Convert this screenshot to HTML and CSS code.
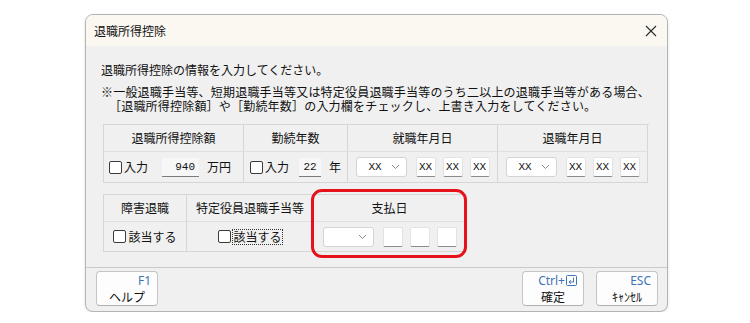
FILE: index.html
```html
<!DOCTYPE html>
<html lang="ja">
<head>
    <meta charset="UTF-8">
    <meta name="viewport" content="width=device-width, initial-scale=1.0">
    <title>退職所得控除</title>
    <link rel="stylesheet" href="styles.css">
</head>
<body>
    <div class="dialog">
        <div class="titlebar">
            <span class="title">退職所得控除</span>
            <svg class="close" width="12" height="12" viewBox="0 0 12 12"><path d="M1 1L11 11M11 1L1 11" stroke="#2b2b2b" stroke-width="1.1" fill="none"/></svg>
        </div>

        <div class="content">
            <p class="lead">退職所得控除の情報を入力してください。</p>
            <p class="note">※一般退職手当等、短期退職手当等又は特定役員退職手当等のうち二以上の退職手当等がある場合、<br>［退職所得控除額］や［勤続年数］の入力欄をチェックし、上書き入力をしてください。</p>

            <div class="grid grid-top">
                <div class="cell head">退職所得控除額</div>
                <div class="cell head">勤続年数</div>
                <div class="cell head">就職年月日</div>
                <div class="cell head">退職年月日</div>

                <div class="cell data left">
                    <span class="check"></span><span class="label">入力</span>
                    <span class="field amount">940</span><span class="unit">万円</span>
                </div>
                <div class="cell data left years">
                    <span class="check"></span><span class="label">入力</span>
                    <span class="field short">22</span><span class="unit">年</span>
                </div>
                <div class="cell data">
                    <span class="select">XX<svg class="chev" width="9" height="6" viewBox="0 0 9 6"><path d="M1 1L4.5 4.5L8 1" stroke="#8a8a8a" fill="none"/></svg></span>
                    <span class="box">XX</span><span class="box">XX</span><span class="box">XX</span>
                </div>
                <div class="cell data">
                    <span class="select">XX<svg class="chev" width="9" height="6" viewBox="0 0 9 6"><path d="M1 1L4.5 4.5L8 1" stroke="#8a8a8a" fill="none"/></svg></span>
                    <span class="box">XX</span><span class="box">XX</span><span class="box">XX</span>
                </div>
            </div>

            <div class="grid grid-bottom">
                <div class="cell head">障害退職</div>
                <div class="cell head">特定役員退職手当等</div>
                <div class="cell head pay">支払日</div>

                <div class="cell data">
                    <span class="check"></span><span class="label">該当する</span>
                </div>
                <div class="cell data">
                    <span class="check"></span><span class="label focus">該当する</span>
                </div>
                <div class="cell data pay-data">
                    <span class="select empty"><svg class="chev" width="9" height="6" viewBox="0 0 9 6"><path d="M1 1L4.5 4.5L8 1" stroke="#8a8a8a" fill="none"/></svg></span>
                    <span class="box"></span><span class="box"></span><span class="box"></span>
                </div>
            </div>
        </div>

        <div class="footer">
            <button class="btn">
                <span class="key">F1</span>
                <span class="name">ヘルプ</span>
            </button>
            <div class="spacer"></div>
            <button class="btn">
                <span class="key">Ctrl+<svg class="enter" width="11" height="11" viewBox="0 0 11 11"><rect x="0.5" y="0.5" width="10" height="10" rx="1" stroke="#3f74b8" fill="none"/><path d="M7.5 2.5V7H3M4.8 5.2L3 7L4.8 8.8" stroke="#3f74b8" fill="none"/></svg></span>
                <span class="name">確定</span>
            </button>
            <button class="btn">
                <span class="key">ESC</span>
                <span class="name">ｷｬﾝｾﾙ</span>
            </button>
        </div>
    </div>
</body>
</html>
```

FILE: styles.css
```css
body {
    margin: 0;
    background: #ffffff;
    font-family: "Noto Sans CJK JP", "Noto Sans", sans-serif;
    font-size: 12px;
    color: #111111;
}
.dialog {
    margin: 14px 0 0 85px;
    width: 581px;
    height: 296px;
    border: 1px solid #b4b4b4;
    border-radius: 8px;
    background: #f0f0f0;
    display: flex;
    flex-direction: column;
    overflow: hidden;
    box-shadow: 0 1px 3px rgba(0, 0, 0, 0.12);
}
.titlebar {
    height: 31px;
    background: #fbf7f1;
    display: flex;
    align-items: center;
    padding: 0 10px 0 8px;
    flex: none;
}
.title {
    flex: 1;
    line-height: 16px;
}
.close {
    margin-top: 1px;
}
.content {
    flex: 1;
    padding: 16px 0 0 15px;
}
.lead {
    margin: 0;
    line-height: 16px;
}
.note {
    margin: 7px 0 0;
    line-height: 14px;
    padding-left: 8px;
    text-indent: -8px;
    white-space: nowrap;
    letter-spacing: 0.2px;
}
.grid {
    display: grid;
    margin-left: 2px;
    border-top: 1px solid #d6d6d6;
    border-left: 1px solid #d6d6d6;
}
.grid-top {
    margin-top: 11px;
    grid-template-columns: 140px 104px 150px 150px;
    grid-template-rows: 27px 31px;
    width: 545px;
}
.grid-bottom {
    margin-top: 11px;
    grid-template-columns: 83px 127px 152px;
    grid-template-rows: 27px 30px;
    width: 363px;
}
.cell {
    border-right: 1px solid #d6d6d6;
    border-bottom: 1px solid #d6d6d6;
    display: flex;
    align-items: center;
    justify-content: center;
    line-height: 14px;
}
.head {
    border-bottom-color: #e0e0e0;
}
.left {
    justify-content: flex-start;
    padding-left: 5px;
}
.years {
    padding-left: 6px;
}
.check {
    width: 11px;
    height: 11px;
    border: 1px solid #3a3a3a;
    border-radius: 2px;
    background: #ffffff;
    margin-right: 2px;
}
.label {
    line-height: 14px;
}
.focus {
    outline: 1px dotted #333;
    outline-offset: 0;
}
.field {
    height: 19px;
    line-height: 19px;
    background: #f7f7f7;
    border-bottom: 1px solid #7c7c7c;
    text-align: right;
    font-family: "Liberation Mono", monospace;
    font-size: 11px;
    box-sizing: border-box;
    padding-right: 4px;
}
.amount {
    width: 37px;
    margin-left: 14px;
}
.short {
    width: 22px;
    margin-left: 10px;
    text-align: center;
    padding-right: 0;
}
.unit {
    margin-left: 8px;
}
.select {
    width: 51px;
    height: 20px;
    box-sizing: border-box;
    background: #ffffff;
    border: 1px solid #d4d4d4;
    border-radius: 3px;
    display: flex;
    align-items: center;
    padding: 0 6px 0 12px;
    font-family: "Liberation Mono", monospace;
    font-size: 11px;
    margin-right: 2px;
}
.select .chev {
    margin-left: auto;
}
.box {
    width: 20px;
    height: 20px;
    box-sizing: border-box;
    background: #ffffff;
    border: 1px solid #e2e2e2;
    border-bottom: 1px solid #8a8a8a;
    border-radius: 2px;
    margin-left: 7px;
    display: flex;
    align-items: center;
    justify-content: center;
    font-family: "Liberation Mono", monospace;
    font-size: 11px;
}
.pay {
    position: relative;
}
.pay::after {
    content: "";
    position: absolute;
    left: -3px;
    right: -2px;
    top: -6px;
    bottom: -37px;
    border: 3px solid #e5121c;
    border-radius: 11px;
}
.footer {
    flex: none;
    height: 40px;
    border-top: 1px solid #cacaca;
    display: flex;
    align-items: flex-start;
    padding: 3px 9px 0 10px;
    gap: 12px;
}
.spacer {
    flex: 1;
}
.btn {
    width: 62px;
    height: 35px;
    background: #fdfdfd;
    border: 1px solid #c4c4c4;
    border-bottom-color: #b0b0b0;
    border-radius: 4px;
    padding: 1px 6px 0;
    display: flex;
    flex-direction: column;
    font-family: "Noto Sans CJK JP", "Noto Sans", sans-serif;
    font-size: 12px;
    color: #111111;
}
.key {
    align-self: flex-end;
    color: #3f74b8;
    line-height: 15px;
    height: 15px;
    display: flex;
    align-items: center;
    gap: 1px;
    font-family: "Noto Sans", sans-serif;
}
.name {
    align-self: center;
    line-height: 17px;
}
```
